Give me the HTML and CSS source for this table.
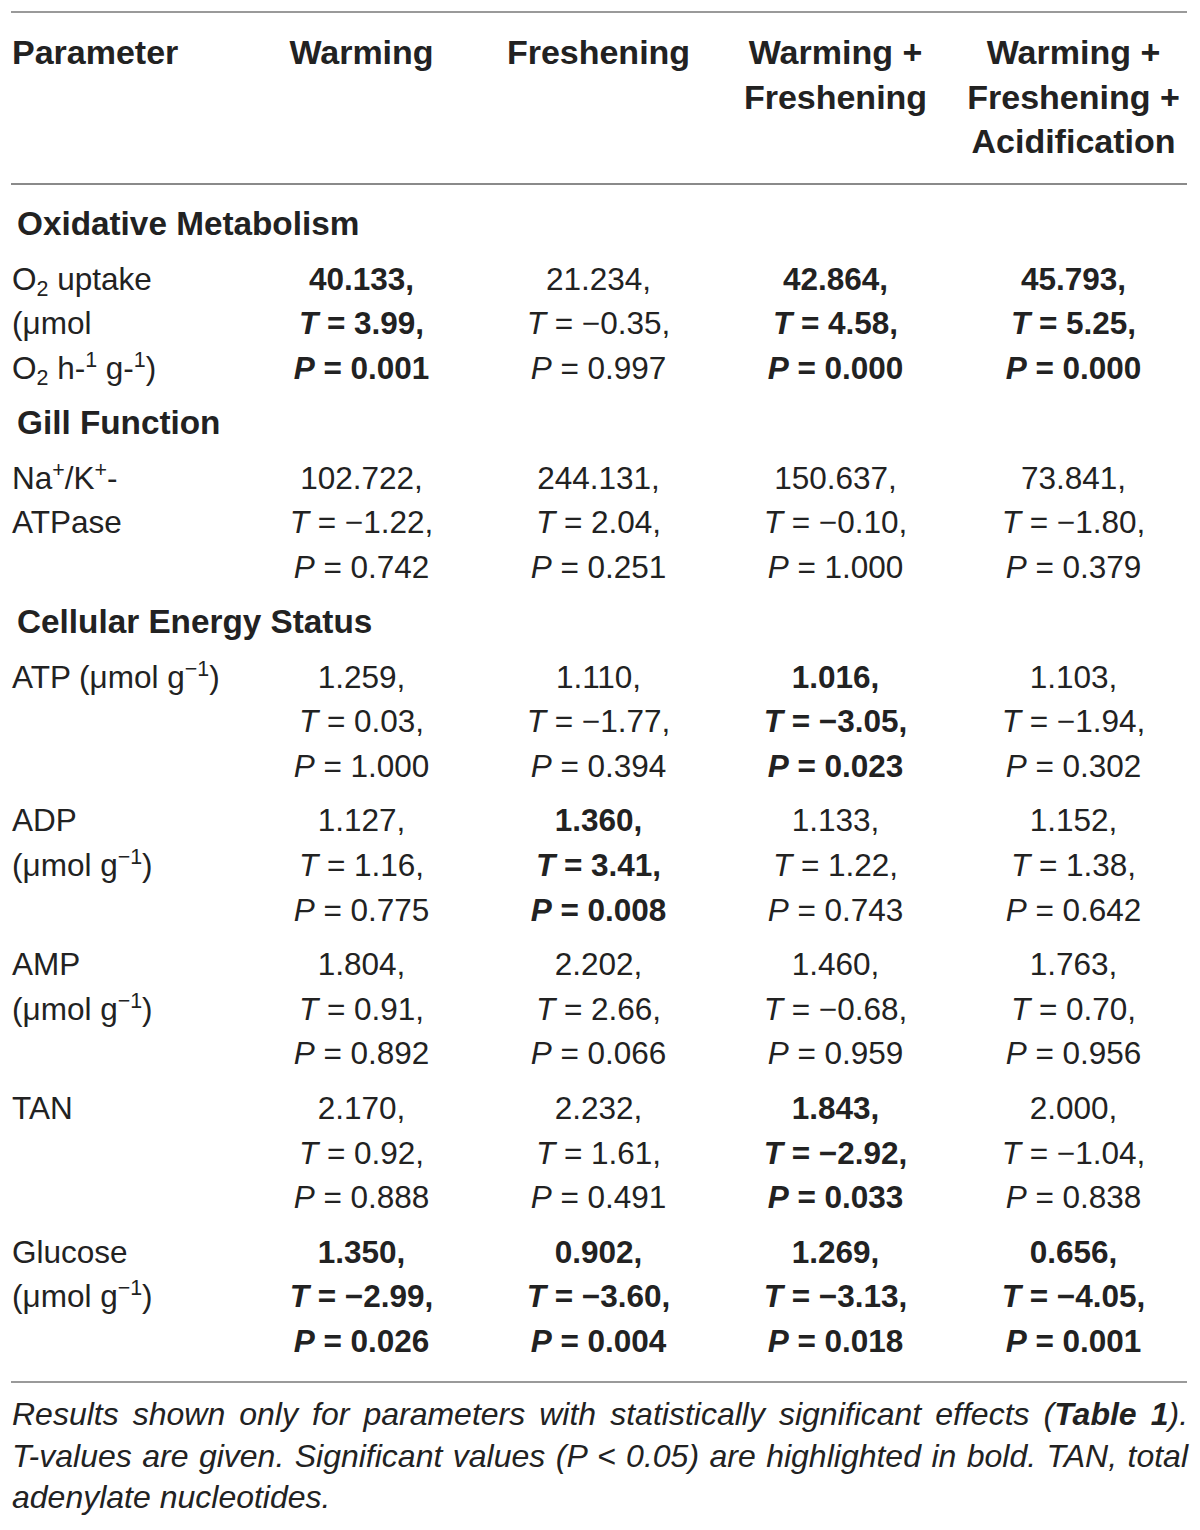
FILE: index.html
```html
<!DOCTYPE html>
<html>
<head>
<meta charset="utf-8">
<link rel="stylesheet" href="styles.css">
</head>
<body>
<div class="page">
<table class="tbl">
<colgroup>
<col class="c1"><col class="c2"><col class="c3"><col class="c4"><col class="c5">
</colgroup>
<thead>
<tr>
<th class="param">Parameter</th>
<th>Warming</th>
<th>Freshening</th>
<th>Warming +<br>Freshening</th>
<th>Warming +<br>Freshening +<br>Acidification</th>
</tr>
</thead>
<tbody>
<tr class="section first"><td colspan="5">Oxidative Metabolism</td></tr>
<tr class="data">
<td class="param">O<sub>2</sub> uptake<br>(μmol<br>O<sub>2</sub> h-<sup>1</sup> g-<sup>1</sup>)</td>
<td class="sig">40.133,<br><i>T</i> = 3.99,<br><i>P</i> = 0.001</td>
<td>21.234,<br><i>T</i> = −0.35,<br><i>P</i> = 0.997</td>
<td class="sig">42.864,<br><i>T</i> = 4.58,<br><i>P</i> = 0.000</td>
<td class="sig">45.793,<br><i>T</i> = 5.25,<br><i>P</i> = 0.000</td>
</tr>
<tr class="section"><td colspan="5">Gill Function</td></tr>
<tr class="data">
<td class="param">Na<sup>+</sup>/K<sup>+</sup>-<br>ATPase</td>
<td>102.722,<br><i>T</i> = −1.22,<br><i>P</i> = 0.742</td>
<td>244.131,<br><i>T</i> = 2.04,<br><i>P</i> = 0.251</td>
<td>150.637,<br><i>T</i> = −0.10,<br><i>P</i> = 1.000</td>
<td>73.841,<br><i>T</i> = −1.80,<br><i>P</i> = 0.379</td>
</tr>
<tr class="section"><td colspan="5">Cellular Energy Status</td></tr>
<tr class="data">
<td class="param">ATP (μmol g<sup>−1</sup>)</td>
<td>1.259,<br><i>T</i> = 0.03,<br><i>P</i> = 1.000</td>
<td>1.110,<br><i>T</i> = −1.77,<br><i>P</i> = 0.394</td>
<td class="sig">1.016,<br><i>T</i> = −3.05,<br><i>P</i> = 0.023</td>
<td>1.103,<br><i>T</i> = −1.94,<br><i>P</i> = 0.302</td>
</tr>
<tr class="data">
<td class="param">ADP<br>(μmol g<sup>−1</sup>)</td>
<td>1.127,<br><i>T</i> = 1.16,<br><i>P</i> = 0.775</td>
<td class="sig">1.360,<br><i>T</i> = 3.41,<br><i>P</i> = 0.008</td>
<td>1.133,<br><i>T</i> = 1.22,<br><i>P</i> = 0.743</td>
<td>1.152,<br><i>T</i> = 1.38,<br><i>P</i> = 0.642</td>
</tr>
<tr class="data">
<td class="param">AMP<br>(μmol g<sup>−1</sup>)</td>
<td>1.804,<br><i>T</i> = 0.91,<br><i>P</i> = 0.892</td>
<td>2.202,<br><i>T</i> = 2.66,<br><i>P</i> = 0.066</td>
<td>1.460,<br><i>T</i> = −0.68,<br><i>P</i> = 0.959</td>
<td>1.763,<br><i>T</i> = 0.70,<br><i>P</i> = 0.956</td>
</tr>
<tr class="data">
<td class="param">TAN</td>
<td>2.170,<br><i>T</i> = 0.92,<br><i>P</i> = 0.888</td>
<td>2.232,<br><i>T</i> = 1.61,<br><i>P</i> = 0.491</td>
<td class="sig">1.843,<br><i>T</i> = −2.92,<br><i>P</i> = 0.033</td>
<td>2.000,<br><i>T</i> = −1.04,<br><i>P</i> = 0.838</td>
</tr>
<tr class="data last">
<td class="param">Glucose<br>(μmol g<sup>−1</sup>)</td>
<td class="sig">1.350,<br><i>T</i> = −2.99,<br><i>P</i> = 0.026</td>
<td class="sig">0.902,<br><i>T</i> = −3.60,<br><i>P</i> = 0.004</td>
<td class="sig">1.269,<br><i>T</i> = −3.13,<br><i>P</i> = 0.018</td>
<td class="sig">0.656,<br><i>T</i> = −4.05,<br><i>P</i> = 0.001</td>
</tr>
</tbody>
</table>
<p class="caption">Results shown only for parameters with statistically significant effects (<b>Table 1</b>). <span class="nw">T-values</span> are given. Significant values (P &lt; 0.05) are highlighted in bold. TAN, total adenylate nucleotides.</p>
</div>
</body>
</html>
```

FILE: styles.css
```css
html, body {
  margin: 0;
  padding: 0;
  background: #ffffff;
}

body {
  font-family: "Liberation Sans", Arial, sans-serif;
  color: #222222;
}

.page {
  padding: 11px 13px 0 11px;
}

.tbl {
  width: 1176px;
  border-collapse: collapse;
  table-layout: fixed;
  border-top: 2px solid #9a9a9a;
  border-bottom: 2px solid #9a9a9a;
}

.c1 { width: 232px; }
.c2 { width: 237px; }
.c3 { width: 237px; }
.c4 { width: 237px; }
.c5 { width: 233px; }

.tbl th {
  font-size: 34px;
  font-weight: bold;
  line-height: 44.6px;
  text-align: center;
  vertical-align: top;
  padding: 17px 0 19px;
  border-bottom: 2px solid #8a8a8a;
  white-space: nowrap;
}

.tbl th.param {
  text-align: left;
  padding-left: 1px;
}

.tbl td {
  font-size: 31.5px;
  line-height: 44.6px;
  text-align: center;
  vertical-align: top;
  padding: 4px 0 6px;
  white-space: nowrap;
}

.tbl th:nth-child(5),
.tbl td:nth-child(5) {
  padding-left: 6px;
}

.tbl td.param {
  text-align: left;
  padding-left: 1px;
}

.tbl tr.section td {
  font-size: 33.3px;
  font-weight: bold;
  text-align: left;
  padding: 4px 0 6.5px 6px;
}

.tbl tr.section.first td {
  padding-top: 17px;
}

.tbl tr.last td {
  padding-bottom: 17.5px;
}

.tbl td.sig {
  font-weight: bold;
}

.tbl sub, .tbl sup {
  font-size: 0.68em;
  line-height: 0;
}

.tbl sub {
  vertical-align: -0.3em;
}

.tbl sup {
  vertical-align: 0.55em;
}

.caption {
  margin: 11px 0 0;
  padding-left: 1px;
  width: 1176px;
  font-size: 32px;
  font-style: italic;
  line-height: 41.5px;
  text-align: justify;
}

.nw {
  white-space: nowrap;
}
```
